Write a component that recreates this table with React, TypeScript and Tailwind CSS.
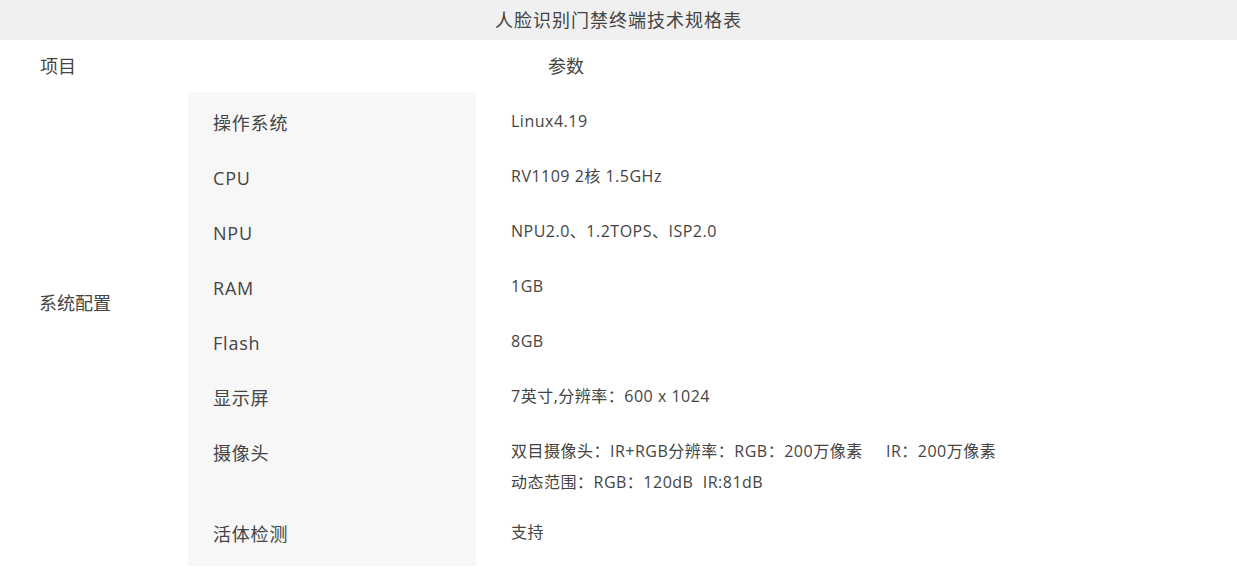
const rows = [
  { label: "操作系统", value: ["Linux4.19"], h: "h-[55px]" },
  { label: "CPU", value: ["RV1109 2核 1.5GHz"], h: "h-[55px]" },
  { label: "NPU", value: ["NPU2.0、1.2TOPS、ISP2.0"], h: "h-[55px]" },
  { label: "RAM", value: ["1GB"], h: "h-[55px]" },
  { label: "Flash", value: ["8GB"], h: "h-[55px]" },
  { label: "显示屏", value: ["7英寸,分辨率：600 x 1024"], h: "h-[55px]" },
  {
    label: "摄像头",
    value: [
      "双目摄像头：IR+RGB分辨率：RGB：200万像素\u00a0\u00a0\u00a0\u00a0\u00a0IR：200万像素",
      "动态范围：RGB：120dB\u00a0\u00a0IR:81dB",
    ],
    h: "h-[81px]",
  },
  { label: "活体检测", value: ["支持"], h: "h-[63px]" },
]

export default function App() {
  return (
    <div
      className="w-[1237px] bg-white text-[#444]"
      style={{ fontFamily: '"Open Sans", "Noto Sans CJK SC", sans-serif' }}
    >
      <div className="h-10 bg-[#f0f0f0] flex items-center justify-center text-[18px] tracking-[1px]">
        人脸识别门禁终端技术规格表
      </div>

      <div className="flex h-[52px] items-center text-[18px]">
        <div className="w-[188px] pl-10">项目</div>
        <div className="pl-[360px]">参数</div>
      </div>

      <div className="flex">
        <div className="w-[188px] pl-[39px] pt-[198px] text-[18px] leading-[26px]">系统配置</div>
        <div className="flex flex-col">
          {rows.map((r) => (
            <div key={r.label} className={`flex ${r.h}`}>
              <div className="w-[288px] bg-[#f7f7f7] pl-[25px] pt-[18px] text-[18px] leading-[26px] tracking-[0.8px]">
                {r.label}
              </div>
              <div className="pl-[35px] pt-[14px] text-[16px] leading-[31px] tracking-[0.5px]">
                {r.value.map((v) => (
                  <div key={v}>{v}</div>
                ))}
              </div>
            </div>
          ))}
        </div>
      </div>
    </div>
  )
}
